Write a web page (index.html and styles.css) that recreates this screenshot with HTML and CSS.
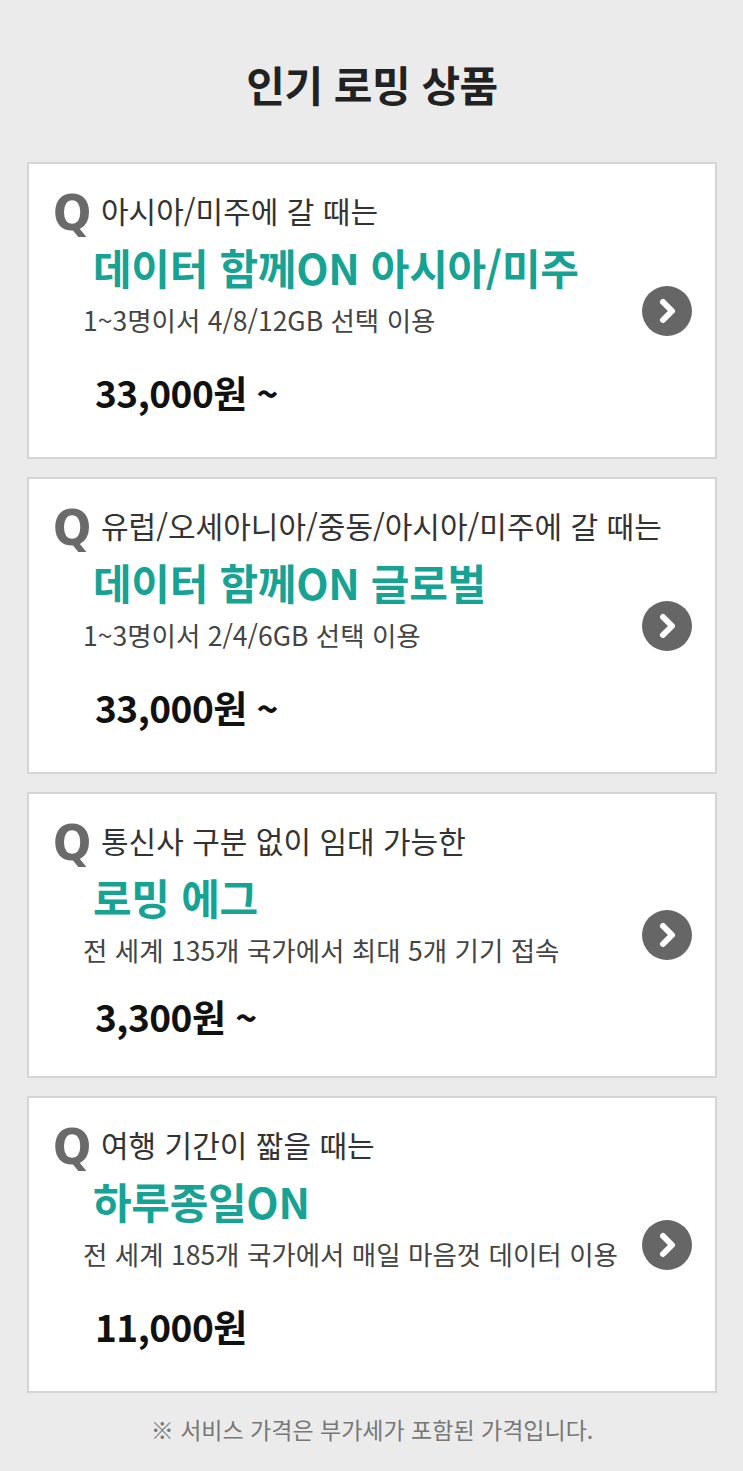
FILE: index.html
```html
<!DOCTYPE html>
<html lang="ko">
<head>
<meta charset="utf-8">
<title>인기 로밍 상품</title>
<link rel="stylesheet" href="styles.css">
</head>
<body>
<main class="page">
  <h1 class="page-title">인기 로밍 상품</h1>
  <ul class="cards">
    <li class="card">
      <div class="card-body">
        <p class="question"><span class="q-mark">Q</span><span class="q-text">아시아/미주에 갈 때는</span></p>
        <h2 class="product">데이터 함께ON 아시아/미주</h2>
        <p class="desc">1~3명이서 4/8/12GB 선택 이용</p>
        <p class="price">33,000원 ~</p>
      </div>
      <span class="arrow"><svg viewBox="0 0 50 50" width="50" height="50"><circle cx="25" cy="25" r="25" fill="#666"/><path d="M21 16 L30 25 L21 34" fill="none" stroke="#fff" stroke-width="6" stroke-linecap="round" stroke-linejoin="round"/></svg></span>
    </li>
    <li class="card">
      <div class="card-body">
        <p class="question"><span class="q-mark">Q</span><span class="q-text">유럽/오세아니아/중동/아시아/미주에 갈 때는</span></p>
        <h2 class="product">데이터 함께ON 글로벌</h2>
        <p class="desc">1~3명이서 2/4/6GB 선택 이용</p>
        <p class="price">33,000원 ~</p>
      </div>
      <span class="arrow"><svg viewBox="0 0 50 50" width="50" height="50"><circle cx="25" cy="25" r="25" fill="#666"/><path d="M21 16 L30 25 L21 34" fill="none" stroke="#fff" stroke-width="6" stroke-linecap="round" stroke-linejoin="round"/></svg></span>
    </li>
    <li class="card card--compact">
      <div class="card-body">
        <p class="question"><span class="q-mark">Q</span><span class="q-text">통신사 구분 없이 임대 가능한</span></p>
        <h2 class="product">로밍 에그</h2>
        <p class="desc">전 세계 135개 국가에서 최대 5개 기기 접속</p>
        <p class="price">3,300원 ~</p>
      </div>
      <span class="arrow"><svg viewBox="0 0 50 50" width="50" height="50"><circle cx="25" cy="25" r="25" fill="#666"/><path d="M21 16 L30 25 L21 34" fill="none" stroke="#fff" stroke-width="6" stroke-linecap="round" stroke-linejoin="round"/></svg></span>
    </li>
    <li class="card">
      <div class="card-body">
        <p class="question"><span class="q-mark">Q</span><span class="q-text">여행 기간이 짧을 때는</span></p>
        <h2 class="product">하루종일ON</h2>
        <p class="desc">전 세계 185개 국가에서 매일 마음껏 데이터 이용</p>
        <p class="price">11,000원</p>
      </div>
      <span class="arrow"><svg viewBox="0 0 50 50" width="50" height="50"><circle cx="25" cy="25" r="25" fill="#666"/><path d="M21 16 L30 25 L21 34" fill="none" stroke="#fff" stroke-width="6" stroke-linecap="round" stroke-linejoin="round"/></svg></span>
    </li>
  </ul>
  <p class="notice">※ 서비스 가격은 부가세가 포함된 가격입니다.</p>
</main>
</body>
</html>
```

FILE: styles.css
```css
* { box-sizing: border-box; }
html, body { margin: 0; padding: 0; }
body {
  background: #ebebeb;
  font-family: "Noto Sans CJK KR", "Noto Sans", sans-serif;
  color: #222;
}
.page {
  padding: 54px 26px 30px 27px;
}
.page-title {
  margin: 0 0 48px;
  text-align: center;
  font-size: 42px;
  line-height: 60px;
  font-weight: 700;
  letter-spacing: -0.5px;
  color: #222;
}
.cards {
  list-style: none;
  margin: 0;
  padding: 0;
  display: flex;
  flex-direction: column;
  gap: 18px;
}
.card {
  background: #fff;
  border: 2px solid #d5d5d5;
  display: flex;
  align-items: center;
  height: 297px;
}
.card--compact { height: 286px; }
.card-body {
  flex: 1;
  min-width: 0;
  padding: 21px 0 0 24px;
  align-self: flex-start;
  white-space: nowrap;
}
.card p, .card h2 { margin: 0; }
.question {
  display: flex;
  align-items: center;
  height: 50px;
}
.q-mark {
  font-family: "DejaVu Sans Condensed", "DejaVu Sans", sans-serif;
  font-stretch: condensed;
  font-weight: 700;
  font-size: 50px;
  line-height: 50px;
  color: #6a6a6a;
  width: 48px;
  flex: none;
  position: relative;
  top: 3px;
}
.q-text {
  font-size: 30px;
  line-height: 50px;
  color: #333;
  letter-spacing: 0;
}
.product {
  margin-top: 4px !important;
  padding-left: 40px;
  font-size: 42px;
  line-height: 56px;
  font-weight: 700;
  color: #16a394;
  letter-spacing: -0.3px;
}
.desc {
  margin-top: 5px !important;
  padding-left: 30px;
  font-size: 26.5px;
  line-height: 40px;
  color: #444;
  letter-spacing: 0;
}
.price {
  margin-top: 28px !important;
  padding-left: 42px;
  font-size: 37px;
  line-height: 48px;
  font-weight: 700;
  color: #111;
  letter-spacing: -0.5px;
}
.card--compact .price { margin-top: 22px !important; }
.arrow {
  flex: none;
  width: 50px;
  height: 50px;
  margin-right: 23px;
  display: block;
}
.arrow svg { display: block; }
.notice {
  margin: 20px 0 0;
  text-align: center;
  font-size: 23px;
  line-height: 32px;
  color: #777;
  letter-spacing: 0;
}
```
